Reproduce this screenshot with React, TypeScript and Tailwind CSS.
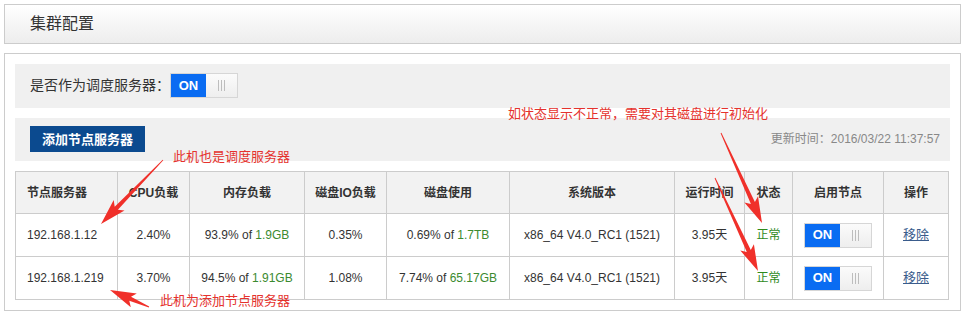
import React from "react";

const FONT = { fontFamily: '"Liberation Sans", Arial, "Noto Sans CJK SC", sans-serif' };

function Switch() {
  return (
    <div className="flex h-[25px] w-[68px] border border-[#d6d6d6] bg-white">
      <div className="flex w-[35px] items-center justify-center bg-[#0a6cf2] text-[13px] font-bold text-white">ON</div>
      <div className="flex flex-1 items-center justify-center gap-[2px] bg-gradient-to-b from-[#fbfbfb] to-[#eeeeee]">
        <div className="h-[11px] w-px bg-[#bdbdbd]" />
        <div className="h-[11px] w-px bg-[#bdbdbd]" />
        <div className="h-[11px] w-px bg-[#bdbdbd]" />
      </div>
    </div>
  );
}

function arrowPoints(tx: number, ty: number, px: number, py: number) {
  const dx = px - tx;
  const dy = py - ty;
  const len = Math.sqrt(dx * dx + dy * dy);
  const ux = dx / len;
  const uy = dy / len;
  const nx = -uy;
  const ny = ux;
  const L = 22;
  const W = 7.5;
  const w = 2.2;
  const bx = px - ux * L;
  const by = py - uy * L;
  const barb = 4;
  const pts: [number, number][] = [
    [tx + nx * 0.4, ty + ny * 0.4],
    [bx + nx * w, by + ny * w],
    [bx - ux * barb + nx * W, by - uy * barb + ny * W],
    [px, py],
    [bx - ux * barb - nx * W, by - uy * barb - ny * W],
    [bx - nx * w, by - ny * w],
    [tx - nx * 0.4, ty - ny * 0.4],
  ];
  return pts.map((p) => `${p[0].toFixed(1)},${p[1].toFixed(1)}`).join(" ");
}

const cols = [102, 72, 115, 82, 123, 165, 70, 48, 91, 65];

const rows = [
  { ip: "192.168.1.12", cpu: "2.40%", memP: "93.9%", memT: "1.9GB", io: "0.35%", diskP: "0.69%", diskT: "1.7TB" },
  { ip: "192.168.1.219", cpu: "3.70%", memP: "94.5%", memT: "1.91GB", io: "1.08%", diskP: "7.74%", diskT: "65.17GB" },
];

export default function App() {
  const th = "border border-[#cccccc] bg-[#f2f2f2] text-center text-[12px] font-bold text-[#333]";
  const td = "border border-[#cccccc] text-center text-[12px] text-[#333]";
  return (
    <div className="relative h-[319px] w-[973px] overflow-hidden bg-white" style={FONT}>
      <div className="flex flex-col pl-[4px] pt-[4px]">
        <div className="flex h-[40px] w-[957px] items-center border border-[#cccccc] bg-gradient-to-b from-[#ffffff] to-[#ededed] pl-[25px] text-[16px] text-[#333]">
          集群配置
        </div>
        <div className="mt-[9px] flex h-[258px] w-[957px] flex-col border border-[#cccccc] bg-white p-[10px]">
          <div className="flex h-[44px] w-[935px] items-center bg-[#f0f0f0] pl-[15px]">
            <span className="text-[14px] text-[#333]">是否作为调度服务器：</span>
            <Switch />
          </div>
          <div className="mt-[10px] flex h-[44px] w-[935px] items-center justify-between bg-[#f0f0f0] pl-[15px] pr-[10px]">
            <div className="flex h-[26px] w-[115px] items-center justify-center bg-[#0b4a8f] text-[13px] font-bold text-white">
              添加节点服务器
            </div>
            <span className="text-[12px] text-[#888]">更新时间：2016/03/22 11:37:57</span>
          </div>
          <table className="mt-[10px] w-[934px] table-fixed border-collapse">
            <colgroup>
              {cols.map((w, i) => (
                <col key={i} style={{ width: w }} />
              ))}
            </colgroup>
            <thead>
              <tr className="h-[42px]">
                <th className={th + " pl-[11px] text-left"}>节点服务器</th>
                <th className={th}>CPU负载</th>
                <th className={th}>内存负载</th>
                <th className={th}>磁盘IO负载</th>
                <th className={th}>磁盘使用</th>
                <th className={th}>系统版本</th>
                <th className={th}>运行时间</th>
                <th className={th}>状态</th>
                <th className={th}>启用节点</th>
                <th className={th}>操作</th>
              </tr>
            </thead>
            <tbody>
              {rows.map((r) => (
                <tr key={r.ip} className="h-[43px]">
                  <td className={td + " pl-[11px] text-left"}>{r.ip}</td>
                  <td className={td}>{r.cpu}</td>
                  <td className={td}>
                    {r.memP} of <span className="text-[#3b8a2f]">{r.memT}</span>
                  </td>
                  <td className={td}>{r.io}</td>
                  <td className={td}>
                    {r.diskP} of <span className="text-[#3b8a2f]">{r.diskT}</span>
                  </td>
                  <td className={td}>x86_64 V4.0_RC1 (1521)</td>
                  <td className={td}>3.95天</td>
                  <td className={td}>
                    <span className="text-[#2f8a1c]">正常</span>
                  </td>
                  <td className={td}>
                    <div className="flex justify-center">
                      <Switch />
                    </div>
                  </td>
                  <td className={td}>
                    <span className="text-[13px] text-[#3a5c8c] underline">移除</span>
                  </td>
                </tr>
              ))}
            </tbody>
          </table>
        </div>
      </div>

      <span className="absolute left-[173px] top-[149px] text-[13px] leading-[16px] text-[#e5322d]">此机也是调度服务器</span>
      <span className="absolute left-[508px] top-[106px] text-[13px] leading-[16px] text-[#e5322d]">如状态显示不正常，需要对其磁盘进行初始化</span>
      <span className="absolute left-[160px] top-[293px] text-[13px] leading-[16px] text-[#e5322d]">此机为添加节点服务器</span>

      <svg className="pointer-events-none absolute left-0 top-0" width="973" height="319" viewBox="0 0 973 319">
        <polygon points={arrowPoints(163, 160, 101, 224)} fill="#f0302a" />
        <polygon points={arrowPoints(149, 307, 110, 290)} fill="#f0302a" />
        <polygon points={arrowPoints(721, 133, 762, 223)} fill="#f0302a" />
        <polygon points={arrowPoints(715, 178, 758, 271)} fill="#f0302a" />
      </svg>
    </div>
  );
}
